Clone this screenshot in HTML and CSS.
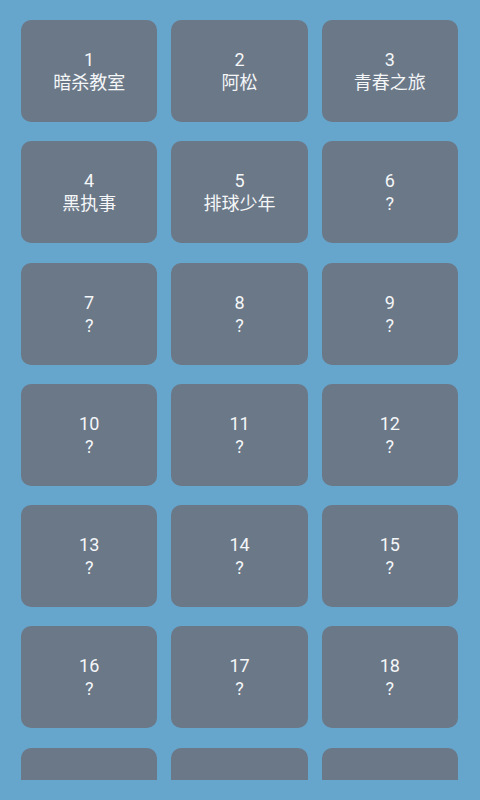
FILE: index.html
```html
<!DOCTYPE html>
<html lang="zh-CN">
<head>
    <meta charset="UTF-8">
    <meta name="viewport" content="width=device-width, initial-scale=1.0">
    <title>番剧列表</title>
    <link rel="stylesheet" href="styles.css">
</head>
<body>
    <div class="list-view">
        <div class="anime-grid">
            <div class="anime-item"><span>1</span><span>暗杀教室</span></div>
            <div class="anime-item"><span>2</span><span>阿松</span></div>
            <div class="anime-item"><span>3</span><span>青春之旅</span></div>
            <div class="anime-item"><span>4</span><span>黑执事</span></div>
            <div class="anime-item"><span>5</span><span>排球少年</span></div>
            <div class="anime-item"><span>6</span><span>?</span></div>
            <div class="anime-item"><span>7</span><span>?</span></div>
            <div class="anime-item"><span>8</span><span>?</span></div>
            <div class="anime-item"><span>9</span><span>?</span></div>
            <div class="anime-item"><span>10</span><span>?</span></div>
            <div class="anime-item"><span>11</span><span>?</span></div>
            <div class="anime-item"><span>12</span><span>?</span></div>
            <div class="anime-item"><span>13</span><span>?</span></div>
            <div class="anime-item"><span>14</span><span>?</span></div>
            <div class="anime-item"><span>15</span><span>?</span></div>
            <div class="anime-item"><span>16</span><span>?</span></div>
            <div class="anime-item"><span>17</span><span>?</span></div>
            <div class="anime-item"><span>18</span><span>?</span></div>
            <!-- 最后一行被列表底部裁掉，文字不可见 -->
            <div class="anime-item"></div>
            <div class="anime-item"></div>
            <div class="anime-item"></div>
        </div>
    </div>
</body>
</html>
```

FILE: styles.css
```css
* {
    margin: 0;
    padding: 0;
    box-sizing: border-box;
}

body {
    font-family: 'Roboto', 'Noto Sans CJK SC', sans-serif;
    background-color: #67a6cc;
    height: 800px;
    overflow: hidden;
}

.list-view {
    height: 780px;
    overflow: hidden;
}

.anime-grid {
    display: grid;
    grid-template-columns: repeat(3, 1fr);
    gap: 19.3px 14px;
    padding: 20px 22px 0 21px;
}

.anime-item {
    height: 102px;
    display: flex;
    flex-direction: column;
    align-items: center;
    justify-content: center;
    background: #6b7887;
    border-radius: 10px;
    color: #f4f6f8;
    font-size: 18px;
    line-height: 23px;
}
```
